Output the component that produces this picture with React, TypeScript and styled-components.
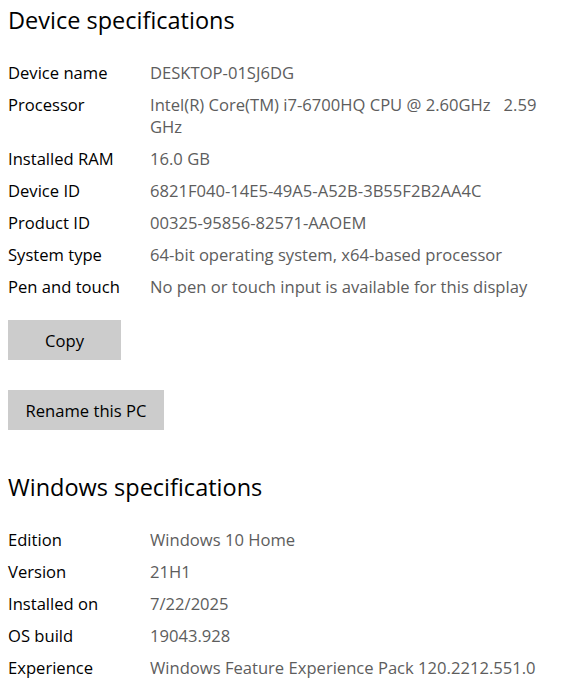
import styled, { createGlobalStyle } from 'styled-components'

const GlobalStyle = createGlobalStyle`
  body {
    margin: 0;
    background: #ffffff;
    font-family: 'Open Sans', 'Noto Sans', sans-serif;
    color: #000000;
  }
`

type Spec = { label: string; value: React.ReactNode }

const deviceSpecs: Spec[] = [
  { label: 'Device name', value: 'DESKTOP-01SJ6DG' },
  {
    label: 'Processor',
    value: (
      <>
        Intel(R) Core(TM) i7-6700HQ CPU @ 2.60GHz&nbsp;&nbsp;&nbsp;2.59
        <br />
        GHz
      </>
    ),
  },
  { label: 'Installed RAM', value: '16.0 GB' },
  { label: 'Device ID', value: '6821F040-14E5-49A5-A52B-3B55F2B2AA4C' },
  { label: 'Product ID', value: '00325-95856-82571-AAOEM' },
  { label: 'System type', value: '64-bit operating system, x64-based processor' },
  { label: 'Pen and touch', value: 'No pen or touch input is available for this display' },
]

const windowsSpecs: Spec[] = [
  { label: 'Edition', value: 'Windows 10 Home' },
  { label: 'Version', value: '21H1' },
  { label: 'Installed on', value: '7/22/2025' },
  { label: 'OS build', value: '19043.928' },
  { label: 'Experience', value: 'Windows Feature Experience Pack 120.2212.551.0' },
]

export default function App() {
  return (
    <Page>
      <GlobalStyle />
      <Heading>Device specifications</Heading>
      <SpecList>
        {deviceSpecs.map((s) => (
          <SpecRow key={s.label}>
            <Label>{s.label}</Label>
            <Value>{s.value}</Value>
          </SpecRow>
        ))}
      </SpecList>
      <Actions>
        <Button $width={113}>Copy</Button>
        <Button $width={156}>Rename this PC</Button>
      </Actions>
      <Heading $second>Windows specifications</Heading>
      <SpecList>
        {windowsSpecs.map((s) => (
          <SpecRow key={s.label}>
            <Label>{s.label}</Label>
            <Value>{s.value}</Value>
          </SpecRow>
        ))}
      </SpecList>
    </Page>
  )
}

const Page = styled.div`
  padding: 0 8px;
  width: 575px;
  box-sizing: border-box;
`

const Heading = styled.h2<{ $second?: boolean }>`
  margin: ${(p) => (p.$second ? '39px' : '2px')} 0 0;
  font-size: 23.5px;
  font-weight: 400;
  line-height: 36px;
  color: #000000;
`

const SpecList = styled.div`
  display: flex;
  flex-direction: column;
  gap: 10px;
  margin-top: 24px;
`

const SpecRow = styled.div`
  display: grid;
  grid-template-columns: 142px 1fr;
  font-size: 16.6px;
  line-height: 22px;
`

const Label = styled.div`
  color: #000000;
`

const Value = styled.div`
  color: #5d5d5d;
  white-space: nowrap;
`

const Actions = styled.div`
  display: flex;
  flex-direction: column;
  align-items: flex-start;
  gap: 30px;
  margin-top: 22px;
`

const Button = styled.button<{ $width: number }>`
  width: ${(p) => p.$width}px;
  height: 40px;
  border: none;
  background: #cccccc;
  font-family: inherit;
  font-size: 16.6px;
  color: #000000;
  padding: 0;
`
